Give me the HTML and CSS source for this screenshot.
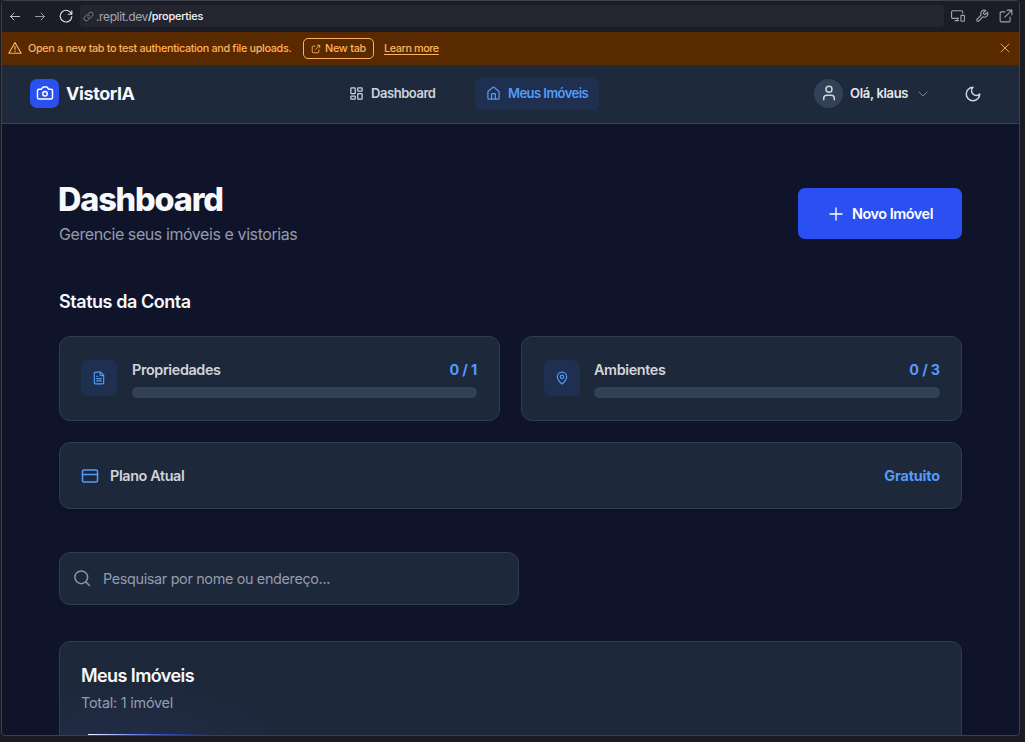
FILE: index.html
```html
<!DOCTYPE html>
<html lang="pt-BR">
<head>
<meta charset="utf-8">
<title>VistorIA</title>
<link rel="stylesheet" href="styles.css">
</head>
<body>
<div class="window">
  <div class="toolbar">
    <svg class="icon back" viewBox="0 0 24 24"><path d="M21 12H3M10 5l-7 7 7 7"/></svg>
    <svg class="icon forward" viewBox="0 0 24 24"><path d="M3 12h18M14 5l7 7-7 7"/></svg>
    <svg class="icon reload" viewBox="0 0 24 24"><path d="M22 3v6h-6M21.500 9A10 10 0 1 0 22 13"/></svg>
    <div class="address">
      <svg class="icon link" viewBox="0 0 24 24"><path d="M10 14a5 5 0 0 0 7 .5l4-4a5 5 0 0 0-7-7l-2 2M14 10a5 5 0 0 0-7-.5l-4 4a5 5 0 0 0 7 7l2-2"/></svg>
      <span class="host">.replit.dev</span><span class="path">/properties</span>
    </div>
    <div class="tools">
      <svg class="icon" viewBox="0 0 24 24"><path d="M13 16H3a2 2 0 0 1-2-2V5a2 2 0 0 1 2-2h15a2 2 0 0 1 2 2v2M7 20h6M11 16v4"/><rect x="17" y="11" width="6" height="10" rx="1"/></svg>
      <svg class="icon" viewBox="0 0 24 24"><path d="M14.700 6.300a1 1 0 0 0 0 1.400l1.600 1.600a1 1 0 0 0 1.400 0l3.770-3.770a6 6 0 0 1-7.940 7.940l-6.910 6.910a2.120 2.120 0 0 1-3-3l6.910-6.910a6 6 0 0 1 7.940-7.940z"/></svg>
      <svg class="icon" viewBox="0 0 24 24"><path d="M14 2h8v8M22 2L10 14M19 14v6a2 2 0 0 1-2 2H4a2 2 0 0 1-2-2V7a2 2 0 0 1 2-2h6"/></svg>
    </div>
  </div>
  <div class="banner">
    <svg class="icon warn" viewBox="0 0 24 24"><path d="M12 2.500L1.500 21h21zM12 9v5M12 17v1"/></svg>
    <span class="message">Open a new tab to test authentication and file uploads.</span>
    <button class="newtab"><svg class="icon" viewBox="0 0 24 24"><path d="M15 3h6v6M21 3L11 13M19 14v5a2 2 0 0 1-2 2H5a2 2 0 0 1-2-2V7a2 2 0 0 1 2-2h5"/></svg><span>New tab</span></button>
    <a class="learn">Learn more</a>
    <svg class="icon close" viewBox="0 0 24 24"><path d="M4 4l16 16M20 4L4 20"/></svg>
  </div>
  <header class="header">
    <div class="brand">
      <span class="logo"><svg class="icon" viewBox="0 0 24 24"><path d="M14.500 4h-5L7 7H4a2 2 0 0 0-2 2v9a2 2 0 0 0 2 2h16a2 2 0 0 0 2-2V9a2 2 0 0 0-2-2h-3z"/><circle cx="12" cy="13" r="3"/></svg></span>
      <span class="name">VistorIA</span>
    </div>
    <nav class="nav">
      <a class="nav-item"><svg class="icon" viewBox="0 0 24 24"><rect x="3" y="3" width="7" height="9" rx="1"/><rect x="14" y="3" width="7" height="5" rx="1"/><rect x="14" y="12" width="7" height="9" rx="1"/><rect x="3" y="16" width="7" height="5" rx="1"/></svg><span class="dash">Dashboard</span></a>
      <a class="nav-item active"><svg class="icon" viewBox="0 0 24 24"><path d="M15 21v-8a1 1 0 0 0-1-1h-4a1 1 0 0 0-1 1v8M3 10a2 2 0 0 1 .71-1.530l7-6a2 2 0 0 1 2.580 0l7 6A2 2 0 0 1 21 10v9a2 2 0 0 1-2 2H5a2 2 0 0 1-2-2z"/></svg><span>Meus Imóveis</span></a>
    </nav>
    <div class="user">
      <span class="avatar"><svg class="icon" viewBox="0 0 24 24"><path d="M19 21v-2a4 4 0 0 0-4-4H9a4 4 0 0 0-4 4v2"/><circle cx="12" cy="7" r="4"/></svg></span>
      <span class="hello">Olá, klaus</span>
      <svg class="icon chevron" viewBox="0 0 24 24"><path d="M4 8l8 8 8-8"/></svg>
      <svg class="icon moon" viewBox="0 0 24 24"><path d="M12 3a6 6 0 0 0 9 9 9 9 0 1 1-9-9z"/></svg>
    </div>
  </header>
  <main class="main">
    <div class="heading">
      <div>
        <h1 class="title">Dashboard</h1>
        <p class="subtitle">Gerencie seus imóveis e vistorias</p>
      </div>
      <button class="primary"><svg class="icon" viewBox="0 0 24 24"><path d="M4 12h16M12 4v16"/></svg><span>Novo Imóvel</span></button>
    </div>
    <h2 class="section-title">Status da Conta</h2>
    <div class="stats">
      <div class="card stat">
        <span class="badge"><svg class="icon" viewBox="0 0 24 24"><path d="M15 2H6a2 2 0 0 0-2 2v16a2 2 0 0 0 2 2h12a2 2 0 0 0 2-2V7zM14 2v4a2 2 0 0 0 2 2h4M10 9H8M16 13H8M16 17H8"/></svg></span>
        <div class="stat-body">
          <div class="stat-row"><span class="label">Propriedades</span><span class="value">0 / 1</span></div>
          <div class="bar"></div>
        </div>
      </div>
      <div class="card stat second">
        <span class="badge"><svg class="icon" viewBox="0 0 24 24"><path d="M20 10c0 5-5.500 10.200-7.400 11.800a1 1 0 0 1-1.200 0C9.500 20.200 4 15 4 10a8 8 0 0 1 16 0"/><circle cx="12" cy="10" r="3"/></svg></span>
        <div class="stat-body">
          <div class="stat-row"><span class="label">Ambientes</span><span class="value">0 / 3</span></div>
          <div class="bar"></div>
        </div>
      </div>
    </div>
    <div class="card plan">
      <svg class="icon" viewBox="0 0 24 24"><rect x="2" y="4" width="20" height="16" rx="2"/><path d="M2 10h20"/></svg>
      <span class="label">Plano Atual</span>
      <span class="value">Gratuito</span>
    </div>
    <div class="card search">
      <svg class="icon" viewBox="0 0 24 24"><circle cx="11" cy="11" r="8.500"/><path d="M22 22l-5-5"/></svg>
      <span>Pesquisar por nome ou endereço...</span>
    </div>
    <section class="card list">
      <h2 class="list-title">Meus Imóveis</h2>
      <p class="total">Total: 1 imóvel</p>
      <div class="shine"></div>
    </section>
  </main>
</div>
</body>
</html>
```
FILE: styles.css
```css
* { box-sizing: border-box; }
body {
  margin: 0;
  height: 742px;
  overflow: hidden;
  background: #1b1b26;
  font-family: Inter, "Liberation Sans", sans-serif;
}
h1, h2, p { margin: 0; }
button { border: 0; background: none; padding: 0; font-family: inherit; }
.icon { fill: none; stroke: currentColor; stroke-width: 2; stroke-linecap: round; stroke-linejoin: round; flex: none; display: block; }

.window {
  width: 1019px;
  height: 736px;
  margin-left: 1px;
  border: 1px solid #3c3f4c;
  border-radius: 4px;
  overflow: hidden;
  background: #0f142b;
}

.toolbar { height: 31px; padding: 0 0 1px 7px; display: flex; align-items: center; background: #1c1c26; color: #c5c9d3; }
.toolbar .icon { width: 13px; height: 13px; stroke-width: 1.9; }
.toolbar .back { width: 12px; }
.toolbar .forward { margin-left: 13px; width: 12px; color: #9da2b0; }
.toolbar .reload { margin-left: 13px; width: 14px; height: 14px; color: #e0e3ea; }
.address { width: 864px; height: 22px; margin-left: 7px; border-radius: 4px; background: #252530; display: flex; align-items: center; font-size: 11px; padding-left: 3px; }
.toolbar .link { width: 11px; height: 11px; color: #8b8f9c; }
.host { color: #a4a8b4; margin-left: 2px; font-size: 12px; letter-spacing: -0.38px; padding-top: 1px; }
.path { color: #f2f4f8; font-weight: 500; letter-spacing: -0.28px; padding-bottom: 1px; }
.tools { display: flex; gap: 10px; margin-left: 7px; color: #a0a4b0; }
.toolbar .tools .icon { width: 14px; height: 14px; }

.banner { height: 33px; padding: 0 8px 1px 6px; display: flex; align-items: center; background: #592a00; color: #ffb25f; font-size: 10.8px; font-weight: 500; }
.warn { width: 14px; height: 14px; }
.message { margin-left: 6px; width: 265px; white-space: nowrap; letter-spacing: -0.32px; }
.newtab { width: 71px; height: 21px; margin: 1px 0 0 10px; border: 1px solid #ffb25f; border-radius: 5px; color: #ffb25f; display: flex; align-items: center; justify-content: center; gap: 4px; font-size: 10.8px; font-weight: 500; letter-spacing: -0.25px; }
.newtab .icon { width: 10px; height: 10px; }
.learn { margin-left: 10px; text-decoration: underline; letter-spacing: -0.4px; text-underline-offset: 2px; }
.close { width: 12px; height: 12px; margin-left: auto; stroke-width: 1.8; }

.header { height: 59px; padding: 0 0 2px 28px; display: flex; align-items: center; background: #1e293b; border-bottom: 1px solid #334155; }
.brand { width: 319px; display: flex; align-items: center; }
.logo { width: 29px; height: 29px; border-radius: 7px; background: #2b50f2; color: #fff; display: grid; place-items: center; }
.logo .icon { width: 18px; height: 18px; }
.name { margin-left: 7px; color: #f6f8fb; font-size: 18px; font-weight: 700; letter-spacing: -0.42px; }
.nav { width: 465px; display: flex; align-items: center; gap: 28px; margin-left: -11px; }
.nav-item { height: 32px; margin-top: 1px; padding: 0 11px; display: flex; align-items: center; gap: 7px; border-radius: 6px; color: #cfd4dd; font-size: 13px; font-weight: 600; letter-spacing: -0.45px; white-space: nowrap; }
.nav-item .icon { width: 15px; height: 15px; }
.nav-item span { padding-bottom: 1px; }
.dash { width: 65px; }
.nav .active { width: 124px; background: #1f2f50; color: #539bfa; letter-spacing: -0.54px; }
.user { display: flex; align-items: center; margin-left: 11px; color: #d1d5db; }
.avatar { width: 29px; height: 29px; border-radius: 50%; background: #334157; display: grid; place-items: center; }
.avatar .icon { width: 18px; height: 18px; }
.hello { margin-left: 7px; width: 60px; white-space: nowrap; color: #e5e7eb; font-size: 13px; font-weight: 600; letter-spacing: -0.32px; }
.chevron { width: 12px; height: 12px; margin: 1px 0 0 7px; color: #7b8494; }
.moon { width: 18px; height: 18px; margin: 1px 0 0 35px; }

.main { height: 612px; padding: 64px 57px 0; overflow: hidden; }
.heading { height: 51px; display: flex; justify-content: space-between; }
.title { margin: -8px 0 0 -1px; line-height: 40px; font-size: 32.4px; font-weight: 800; color: #f6f8fb; letter-spacing: -1.15px; }
.subtitle { margin-top: 3px; line-height: 23px; font-size: 16px; color: #949cac; letter-spacing: -0.42px; white-space: nowrap; }
.primary { width: 164px; height: 51px; border-radius: 7px; background: #2b50f2; color: #fff; display: flex; align-items: center; justify-content: center; gap: 7px; font-size: 14.4px; font-weight: 600; letter-spacing: -0.44px; }
.primary .icon { width: 18px; height: 18px; stroke-width: 1.8; }
.section-title { margin-top: 50px; line-height: 25px; font-size: 18px; font-weight: 600; color: #f6f8fb; letter-spacing: -0.45px; }
.card { border: 1px solid #303d4f; border-radius: 11px; background: #1e283b; }
.stats { margin-top: 22px; display: grid; grid-template-columns: 1fr 1fr; gap: 21px; }
.stat { height: 85px; padding: 0 22px 0 21px; display: flex; align-items: center; }
.second { padding: 0 21px 0 22px; }
.badge { width: 36px; height: 36px; margin-bottom: 1px; border-radius: 7px; background: #1f2f50; color: #539bfa; display: grid; place-items: center; }
.badge .icon { width: 14px; height: 14px; }
.stat-body { flex: 1; margin-left: 15px; }
.second .stat-body { margin-left: 14px; }
.stat-row { height: 20px; margin-bottom: 8px; display: flex; justify-content: space-between; align-items: center; }
.label { color: #d1d5db; font-size: 14.4px; font-weight: 600; letter-spacing: -0.38px; }
.value { color: #539bfa; font-size: 14.4px; font-weight: 700; letter-spacing: -0.15px; }
.bar { height: 11px; border-radius: 6px; background: #334157; }
.plan { height: 67px; margin-top: 21px; padding: 0 21px; display: flex; align-items: center; box-shadow: 0 3px 5px rgba(10, 14, 25, .25); }
.plan .icon { width: 18px; height: 18px; color: #539bfa; }
.plan .label { margin-left: 11px; }
.plan .value { margin-left: auto; }
.search { width: 460px; height: 53px; margin-top: 43px; padding-left: 13px; display: flex; align-items: center; color: #949cac; font-size: 14.4px; letter-spacing: -0.34px; }
.search .icon { width: 18px; height: 18px; margin: 0 12px 2px 0; color: #8793aa; }
.list { height: 150px; margin-top: 36px; padding: 21px; background: radial-gradient(ellipse 160px 70px at 70px 110px, #212d48, #1e283b); }
.list-title { line-height: 25px; font-size: 18px; font-weight: 600; color: #f6f8fb; letter-spacing: -0.58px; }
.total { margin-top: 5px; line-height: 20px; font-size: 14.4px; color: #949cac; letter-spacing: -0.22px; }
.shine { width: 120px; height: 4px; margin: 21px 0 0 7px; background: linear-gradient(90deg, #f4f7ff, #7e8cf0 35%, #3046b0 68%, transparent); }
```
